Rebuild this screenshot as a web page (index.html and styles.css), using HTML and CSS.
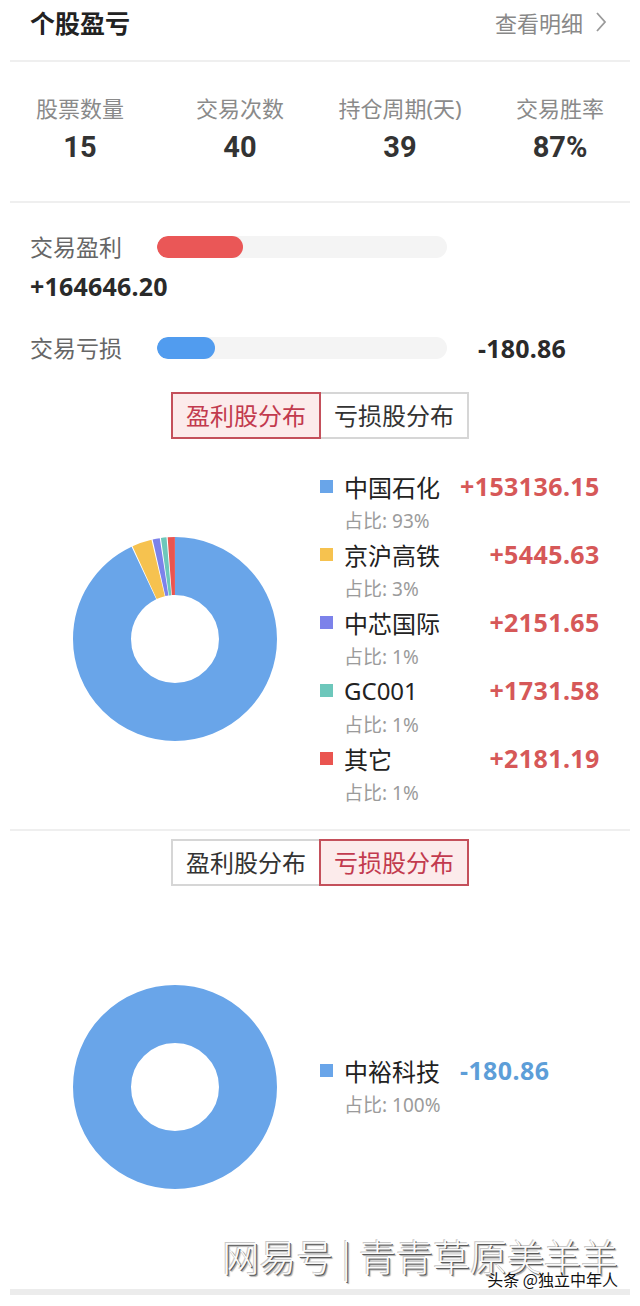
FILE: index.html
```html
<!DOCTYPE html>
<html lang="zh">
<head>
  <meta charset="UTF-8" />
  <meta name="viewport" content="width=device-width, initial-scale=1.0"/>
  <title>个股盈亏</title>
  <link rel="stylesheet" href="styles.css">
</head>
<body>
  <div class="head">
    <h2 class="title">个股盈亏</h2>
    <a class="more">查看明细
      <svg class="chevron" width="12" height="22" viewBox="0 0 12 22"><path d="M2 2 L10 11 L2 20" fill="none" stroke="#9a9a9a" stroke-width="1.8"/></svg>
    </a>
  </div>
  <div class="rule"></div>

  <div class="stats">
    <div class="stat"><div class="stat-label">股票数量</div><div class="stat-value">15</div></div>
    <div class="stat"><div class="stat-label">交易次数</div><div class="stat-value">40</div></div>
    <div class="stat"><div class="stat-label">持仓周期(天)</div><div class="stat-value">39</div></div>
    <div class="stat"><div class="stat-label">交易胜率</div><div class="stat-value">87%</div></div>
  </div>
  <div class="rule"></div>

  <div class="bars">
    <div class="bar-row">
      <span class="bar-label">交易盈利</span>
      <div class="track"><div class="fill fill-profit" style="width: 86px"></div></div>
    </div>
    <div class="bar-amount">+164646.20</div>
    <div class="bar-row second">
      <span class="bar-label">交易亏损</span>
      <div class="track"><div class="fill fill-loss" style="width: 58px"></div></div>
      <span class="bar-amount inline">-180.86</span>
    </div>
  </div>

  <div class="tabs">
    <div class="tab active">盈利股分布</div>
    <div class="tab">亏损股分布</div>
  </div>

  <div class="dist">
    <svg class="donut" width="204" height="204" viewBox="0 0 204 204">
      <g transform="rotate(-90 102 102)" fill="none" stroke-width="58">
        <circle cx="102" cy="102" r="73" stroke="#69a5e9" stroke-dasharray="425.8 458.67" stroke-dashoffset="0"/>
        <circle cx="102" cy="102" r="73" stroke="#f6c24f" stroke-dasharray="14.3 458.67" stroke-dashoffset="-426.57"/>
        <circle cx="102" cy="102" r="73" stroke="#7c82ea" stroke-dasharray="5.2 458.67" stroke-dashoffset="-441.74"/>
        <circle cx="102" cy="102" r="73" stroke="#6dc7bb" stroke-dasharray="4.0 458.67" stroke-dashoffset="-447.74"/>
        <circle cx="102" cy="102" r="73" stroke="#ea5550" stroke-dasharray="5.3 458.67" stroke-dashoffset="-452.56"/>
      </g>
    </svg>
    <div class="legend">
      <span class="swatch c-blue"></span><span class="name">中国石化</span><span class="amount up">+153136.15</span>
      <span class="share">占比: 93%</span>
      <span class="swatch c-yellow"></span><span class="name">京沪高铁</span><span class="amount up">+5445.63</span>
      <span class="share">占比: 3%</span>
      <span class="swatch c-purple"></span><span class="name">中芯国际</span><span class="amount up">+2151.65</span>
      <span class="share">占比: 1%</span>
      <span class="swatch c-teal"></span><span class="name">GC001</span><span class="amount up">+1731.58</span>
      <span class="share">占比: 1%</span>
      <span class="swatch c-red"></span><span class="name">其它</span><span class="amount up">+2181.19</span>
      <span class="share">占比: 1%</span>
    </div>
  </div>
  <div class="rule"></div>

  <div class="tabs tabs-loss">
    <div class="tab">盈利股分布</div>
    <div class="tab active">亏损股分布</div>
  </div>

  <div class="dist dist-loss">
    <svg class="donut" width="204" height="204" viewBox="0 0 204 204">
      <circle cx="102" cy="102" r="73" fill="none" stroke="#69a5e9" stroke-width="58"/>
    </svg>
    <div class="legend">
      <span class="swatch c-blue"></span><span class="name">中裕科技</span><span class="amount down">-180.86</span>
      <span class="share">占比: 100%</span>
    </div>
  </div>

  <div class="watermark">
    <span class="wm-text">网易号 | 青青草原美羊羊</span>
    <span class="wm-small">头条 @独立中年人</span>
  </div>
  <div class="foot-bar"></div>
</body>
</html>
```

FILE: styles.css
```css
body {
  margin: 0;
  background: #fff;
  font-family: "Noto Sans", "Noto Sans CJK SC", sans-serif;
  color: #333;
}
.head {
  display: flex;
  justify-content: space-between;
  align-items: center;
  height: 44px;
  padding: 0 33px 0 30px;
  margin-bottom: 16px;
}
.title {
  margin: 0;
  font-size: 25px;
  font-weight: 700;
  color: #222;
}
.more {
  display: flex;
  align-items: center;
  gap: 12px;
  font-size: 22px;
  color: #888;
}
.rule {
  height: 2px;
  margin: 0 10px;
  background: #efefef;
}
.stats {
  display: grid;
  grid-template-columns: repeat(4, 1fr);
  padding: 32px 0 37px;
  text-align: center;
}
.stat-label {
  font-size: 22px;
  line-height: 28px;
  color: #8a8a8a;
}
.stat-value {
  margin-top: 8px;
  font-family: "Roboto", sans-serif;
  font-size: 29px;
  line-height: 34px;
  font-weight: 700;
  color: #333;
}
.bars {
  padding: 30px 30px 0;
}
.bar-row {
  display: flex;
  align-items: center;
  height: 28px;
}
.bar-row.second {
  margin-top: 34px;
}
.bar-label {
  width: 127px;
  font-size: 23px;
  line-height: 28px;
  color: #666;
}
.track {
  width: 290px;
  height: 22px;
  border-radius: 11px;
  background: #f4f4f4;
  overflow: hidden;
}
.fill {
  height: 100%;
  border-radius: 11px;
}
.fill-profit {
  background: #ea5757;
}
.fill-loss {
  background: #519cef;
}
.bar-amount {
  margin-top: 11px;
  font-size: 25px;
  line-height: 28px;
  font-weight: 700;
  letter-spacing: 0.2px;
  color: #2a2a2a;
}
.bar-amount.inline {
  margin: 0 0 0 31px;
}
.tabs {
  display: flex;
  justify-content: center;
  margin-top: 30px;
}
.tabs-loss {
  margin-top: 8px;
}
.tab {
  width: 150px;
  height: 47px;
  box-sizing: border-box;
  border: 2px solid #d6d6d6;
  font-size: 24px;
  line-height: 43px;
  text-align: center;
  color: #333;
  background: #fff;
}
.tab + .tab {
  margin-left: -2px;
}
.tab.active {
  position: relative;
  border-color: #c4505b;
  background: #fcebeb;
  color: #c23a4e;
}
.dist {
  display: flex;
  align-items: center;
  padding: 30px 0 20px 73px;
}
.dist-loss {
  padding: 99px 0 0 73px;
}
.legend {
  display: grid;
  grid-template-columns: 24px auto auto;
  grid-auto-rows: 34px;
  align-items: center;
  margin-left: 43px;
}
.swatch {
  width: 13px;
  height: 13px;
}
.c-blue { background: #69a5e9; }
.c-yellow { background: #f6c24f; }
.c-purple { background: #7c82ea; }
.c-teal { background: #6dc7bb; }
.c-red { background: #ea5550; }
.name {
  font-size: 24px;
  color: #222;
}
.amount {
  justify-self: end;
  margin-left: 20px;
  font-size: 25px;
  font-weight: 700;
  letter-spacing: 0.4px;
}
.amount.up {
  color: #d65858;
}
.amount.down {
  color: #5d9ed8;
}
.share {
  grid-column: 2 / 4;
  font-size: 19px;
  color: #9b9b9b;
}
.watermark {
  position: relative;
  height: 50px;
  margin-top: 50px;
  padding-right: 22px;
  text-align: right;
}
.wm-text {
  display: block;
  margin-top: 6px;
  font-family: "Noto Sans CJK SC", sans-serif;
  font-size: 37px;
  line-height: 34px;
  font-weight: 300;
  color: #fbfbfb;
  text-shadow: 1px 1px 0 #5a5a5a, -1px -1px 0 #c8c8c8, 2px 2px 1px #aaa;
}
.wm-small {
  position: absolute;
  right: 22px;
  bottom: 2px;
  font-family: "Noto Sans CJK SC", sans-serif;
  font-size: 16px;
  line-height: 16px;
  color: #111;
  text-shadow: 0 0 2px #fff, 0 0 2px #fff;
}
.foot-bar {
  height: 6px;
  margin: 0 10px;
  background: #ececec;
}
```
